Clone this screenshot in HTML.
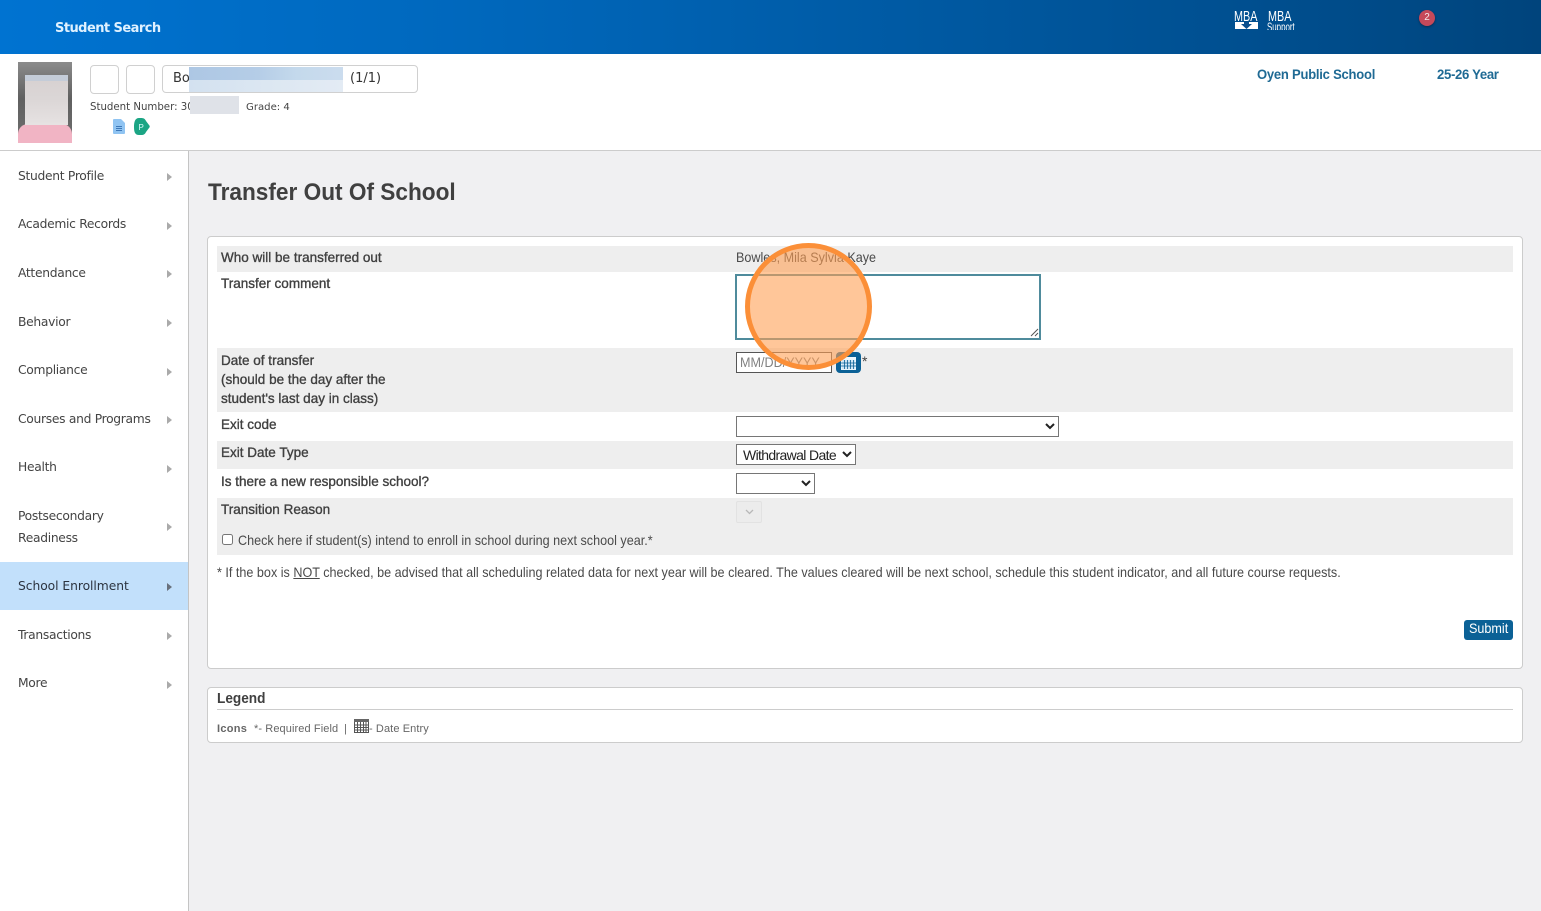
<!DOCTYPE html>
<html><head><meta charset="utf-8"><title>Transfer Out Of School</title>
<style>
*{box-sizing:border-box}
html,body{margin:0;padding:0}
body{width:1541px;height:911px;position:relative;overflow:hidden;background:#f0f0f2;font-family:"Liberation Sans",sans-serif;font-size:14px;color:#404040}
.a{position:absolute;white-space:nowrap}
.s{transform:scaleX(.9);transform-origin:0 0}
#top{left:0;top:0;width:1541px;height:54px;background:linear-gradient(90deg,#0073d1 0%,#0068bd 30%,#004d8c 85%,#00447c 100%)}
#hdr{left:0;top:54px;width:1541px;height:97px;background:#fff;border-bottom:1px solid #ccc}
#side{left:0;top:151px;width:189px;height:760px;background:#fff;border-right:1px solid #c4c4c4}
.n{position:absolute;left:18px;font-family:"DejaVu Sans",sans-serif;font-size:12.3px;color:#444;letter-spacing:-.3px;white-space:nowrap}
.t{position:absolute;left:167px;width:0;height:0;border-left:5px solid #aaa;border-top:4px solid transparent;border-bottom:4px solid transparent}
.box{position:absolute;background:#fff;border:1px solid #d0d0d0;border-radius:4px}
.row{position:absolute;left:217px;width:1296px;background:#eee}
.l{position:absolute;left:221px;color:#404040;-webkit-text-stroke:.35px #404040;white-space:nowrap;line-height:19px;transform:scaleX(.965);transform-origin:0 0}
select{position:absolute;height:21px;font-family:"Liberation Sans",sans-serif;font-size:14px;letter-spacing:-.65px;background:#fff;border:1px solid #767676;border-radius:0;color:#222;padding:0 0 0 2px}
</style></head><body>
<div class="a" id="top"></div>
<div class="a" style="left:55px;top:21px;font-family:'DejaVu Sans',sans-serif;font-weight:700;font-size:13px;letter-spacing:-.55px;color:#dff1ff">Student Search</div>
<div class="a" style="left:1234px;top:8px;color:#fff;font-size:15px;transform:scaleX(.72);transform-origin:0 0">MBA</div>
<div class="a" style="left:1235px;top:22px;width:23px;height:7px;background:#fff"></div>
<svg class="a" style="left:1241px;top:22px" width="11" height="7"><path d="M3 0h5v2h3l-5.500 5L0 2h3z" fill="#0a4f8e"/></svg>
<div class="a" style="left:1268px;top:8px;color:#fff;font-size:15px;transform:scaleX(.72);transform-origin:0 0">MBA</div>
<div class="a" style="left:1267px;top:21px;height:9px;overflow:hidden;color:#fff;font-size:12px;line-height:13px;transform:scaleX(.66);transform-origin:0 0">Support</div>
<div class="a" style="left:1419px;top:10px;width:16px;height:16px;border-radius:50%;background:#c5495a;color:#f5e8ea;font-size:10px;line-height:16px;text-align:center;box-shadow:0 1px 2px #0a2c50">2</div>

<div class="a" id="hdr"></div>
<div class="a" style="left:18px;top:62px;width:54px;height:81px;background:linear-gradient(#8b8b8b,#606060 45%,#6e6e6e)"></div>
<div class="a" style="left:18px;top:124px;width:54px;height:19px;background:#f1b4c4;border-radius:10px 10px 0 0"></div>
<div class="a" style="left:25px;top:75px;width:43px;height:50px;background:linear-gradient(#c4ccd8 0,#c4ccd8 6px,#d8d2d2 6px,#dbd6d6 24px,#e6e2e2 100%)"></div>
<div class="box" style="left:90px;top:65px;width:29px;height:29px"></div>
<div class="box" style="left:126px;top:65px;width:29px;height:29px"></div>
<div class="box" style="left:162px;top:65px;width:256px;height:28px"></div>
<div class="a" style="left:173px;top:71px;font-family:'DejaVu Sans',sans-serif;font-size:13px;color:#333">Bo</div>
<div class="a" style="left:189px;top:67px;width:154px;height:25px;background:linear-gradient(90deg,#adc7e4 0,#b5cde7 45%,#c4d9ec 70%,#cbdcee 100%)"></div>
<div class="a" style="left:189px;top:80px;width:154px;height:12px;background:linear-gradient(90deg,#d3e1f0 0,#dce7f2 50%,#e3ebf4 100%)"></div>
<div class="a" style="left:350px;top:71px;font-family:'DejaVu Sans',sans-serif;font-size:13px;color:#333">(1/1)</div>
<div class="a" style="left:90px;top:102px;font-family:'DejaVu Sans',sans-serif;font-size:10.200px;color:#444">Student Number: 30</div>
<div class="a" style="left:190px;top:96px;width:49px;height:18px;background:#dfe2e8"></div>
<div class="a" style="left:246px;top:102px;font-family:'DejaVu Sans',sans-serif;font-size:10.100px;color:#444">Grade: 4</div>
<svg class="a" style="left:113px;top:119px" width="12" height="15"><path d="M0 1a1 1 0 0 1 1-1h7l4 4v10a1 1 0 0 1-1 1H1a1 1 0 0 1-1-1z" fill="#90c4f2"/><path d="M3 7.500h6M3 9.500h6M3 11.500h6" stroke="#3d78b8"/></svg>
<svg class="a" style="left:133px;top:118px" width="18" height="17"><path d="M6 0h2c3 0 4 1 5 3l3 4c1 1 1 2 0 3l-3 4c-1 2-2 3-5 3H6C2 17 1 14 1 9S2 0 6 0z" fill="#1ba584"/><text x="5.500" y="12" font-size="8" fill="#dff" font-family="Liberation Sans">P</text></svg>
<div class="a" style="left:1257px;top:66px;font-weight:700;font-size:14px;letter-spacing:-.25px;color:#1f6a94;transform:scaleX(.93);transform-origin:0 0">Oyen Public School</div>
<div class="a" style="left:1437px;top:66px;font-weight:700;font-size:14px;letter-spacing:-.35px;color:#1f6a94;transform:scaleX(.94);transform-origin:0 0">25-26 Year</div>

<div class="a" id="side"></div>
<div class="a" style="left:0;top:562px;width:188px;height:48px;background:#c2e0fb"></div>
<div class="n" style="top:169px">Student Profile</div><div class="t" style="top:173px"></div>
<div class="n" style="top:217px">Academic Records</div><div class="t" style="top:222px"></div>
<div class="n" style="top:266px">Attendance</div><div class="t" style="top:270px"></div>
<div class="n" style="top:315px">Behavior</div><div class="t" style="top:319px"></div>
<div class="n" style="top:363px">Compliance</div><div class="t" style="top:368px"></div>
<div class="n" style="top:412px">Courses and Programs</div><div class="t" style="top:416px"></div>
<div class="n" style="top:460px">Health</div><div class="t" style="top:465px"></div>
<div class="n" style="top:509px">Postsecondary</div><div class="n" style="top:531px">Readiness</div><div class="t" style="top:523px"></div>
<div class="n" style="top:579px;color:#2c3440;letter-spacing:-.05px">School Enrollment</div><div class="t" style="top:583px;border-left-color:#68707c"></div>
<div class="n" style="top:628px">Transactions</div><div class="t" style="top:632px"></div>
<div class="n" style="top:676px">More</div><div class="t" style="top:681px"></div>

<div class="a" style="left:208px;top:179px;font-size:24px;font-weight:700;color:#404040;transform:scaleX(.943);transform-origin:0 0">Transfer Out Of School</div>

<div class="box" style="left:207px;top:236px;width:1316px;height:433px;border-color:#ccc"></div>
<div class="row" style="top:246px;height:26px"></div>
<div class="row" style="top:348px;height:64px"></div>
<div class="row" style="top:441px;height:28px"></div>
<div class="row" style="top:498px;height:57px"></div>

<div class="l" style="top:248px">Who will be transferred out</div>
<div class="a s" style="left:736px;top:249px;color:#4a4a4a">Bowles, Mila Sylvia Kaye</div>
<div class="l" style="top:274px">Transfer comment</div>
<div class="a" style="left:735px;top:274px;width:306px;height:66px;background:#fff;border:2px solid #4f8b9c"></div>
<svg class="a" style="left:1030px;top:328px" width="9" height="9"><path d="M1 8 8 1M5 8 8 5" stroke="#555" stroke-width="1"/></svg>
<div class="l" style="top:351px">Date of transfer<br>(should be the day after the<br>student's last day in class)</div>
<div class="a" style="left:736px;top:352px;width:96px;height:21px;background:#fff;border:1px solid #555"></div>
<div class="a s" style="left:740px;top:353px;color:#808080;line-height:19px">MM/DD/YYYY</div>
<div class="a" style="left:836px;top:352px;width:25px;height:21px;background:#0b6196;border-radius:4px"></div>
<svg class="a" style="left:841px;top:357px" width="15" height="13"><rect x=".5" y=".5" width="14" height="12" fill="#cfe6f5" stroke="#e8f4fb"/><rect x="0" y="0" width="15" height="3" fill="#eef7fc"/><path d="M3.500 3v9M6.500 3v9M9.500 3v9M12.500 3v9M0 6h15M0 9h15" stroke="#0b6196" stroke-width=".8"/></svg>
<div class="a" style="left:862px;top:353px;color:#444">*</div>
<div class="l" style="top:415px">Exit code</div>
<select style="left:736px;top:416px;width:323px"><option></option></select>
<div class="l" style="top:443px">Exit Date Type</div>
<select style="left:736px;top:444px;width:120px"><option>Withdrawal Date</option></select>
<div class="l" style="top:472px">Is there a new responsible school?</div>
<select style="left:736px;top:473px;width:79px"><option></option></select>
<div class="l" style="top:500px">Transition Reason</div>
<div class="a" style="left:736px;top:501px;width:26px;height:22px;background:#ececec;border:1px solid #e2e2e2;border-radius:2px"></div>
<svg class="a" style="left:745px;top:509px" width="9" height="6"><path d="M1 1l3.500 3.500L8 1" fill="none" stroke="#b8b8b8" stroke-width="1.300"/></svg>
<input type="checkbox" style="position:absolute;left:222px;top:534px;width:11px;height:11px;margin:0">
<div class="a s" style="left:238px;top:532px;color:#4a4a4a">Check here if student(s) intend to enroll in school during next school year.*</div>
<div class="a s" style="left:217px;top:564px;color:#4a4a4a">* If the box is <u>NOT</u> checked, be advised that all scheduling related data for next year will be cleared. The values cleared will be next school, schedule this student indicator, and all future course requests.</div>
<div class="a" style="left:1464px;top:620px;width:49px;height:20px;background:#0b6196;border-radius:3px"></div>
<div class="a s" style="left:1469px;top:620px;color:#fff;line-height:17px">Submit</div>

<div class="box" style="left:207px;top:687px;width:1316px;height:56px;border-color:#ccc"></div>
<div class="a" style="left:217px;top:691px;font-weight:700;font-size:14.500px;color:#404040;transform:scaleX(.94);transform-origin:0 0">Legend</div>
<div class="a" style="left:217px;top:709px;width:1296px;height:1px;background:#ccc"></div>
<div class="a" style="left:217px;top:723px;font-size:11px;letter-spacing:.3px;color:#666"><b>Icons</b></div>
<div class="a" style="left:254px;top:723px;font-size:11px;letter-spacing:.1px;color:#666">*- Required Field</div>
<div class="a" style="left:344px;top:723px;font-size:11px;color:#666">|</div>
<svg class="a" style="left:354px;top:719px" width="15" height="14"><rect x=".5" y=".5" width="14" height="13" fill="#fff" stroke="#555"/><rect y="0" width="15" height="3" fill="#666"/><path d="M3.500 3v10M6.500 3v10M9.500 3v10M12 3v10M0 6h15M0 8.500h15M0 11h15" stroke="#555" stroke-width="1"/></svg>
<div class="a" style="left:369px;top:723px;font-size:11px;letter-spacing:.1px;color:#666">- Date Entry</div>

<div class="a" style="left:745px;top:243px;width:127px;height:127px;border-radius:50%;background:rgba(255,160,85,.6);border:5px solid #fb8f38"></div>
</body></html>
